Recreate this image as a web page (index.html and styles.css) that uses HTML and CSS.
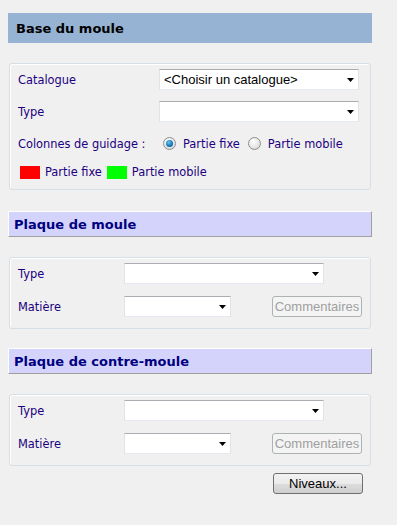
FILE: index.html
```html
<!DOCTYPE html>
<html lang="fr">
<head>
<meta charset="utf-8">
<title>Base du moule</title>
<link rel="stylesheet" href="styles.css">
</head>
<body>
<div class="page">
  <div class="head head-main">Base du moule</div>
  <div class="group g1">
    <div class="row">
      <span class="lbl w1">Catalogue</span>
      <div class="select w200"><span class="val">&lt;Choisir un catalogue&gt;</span><svg class="arr" width="7" height="4" viewBox="0 0 7 4"><path d="M0 0H7L3.5 4Z" fill="#000"/></svg></div>
    </div>
    <div class="row">
      <span class="lbl w1">Type</span>
      <div class="select w200"><span class="val"></span><svg class="arr" width="7" height="4" viewBox="0 0 7 4"><path d="M0 0H7L3.5 4Z" fill="#000"/></svg></div>
    </div>
    <div class="row">
      <span class="lbl w1">Colonnes de guidage :</span>
      <span class="radio on"></span><span class="rtxt">Partie fixe</span>
      <span class="radio"></span><span class="rtxt">Partie mobile</span>
    </div>
    <div class="row legend">
      <span class="sw red"></span><span class="ltxt">Partie fixe</span>
      <span class="sw green"></span><span class="ltxt">Partie mobile</span>
    </div>
  </div>

  <div class="head head-sub">Plaque de moule</div>
  <div class="group g2">
    <div class="row">
      <span class="lbl w2">Type</span>
      <div class="select w200"><span class="val"></span><svg class="arr" width="7" height="4" viewBox="0 0 7 4"><path d="M0 0H7L3.5 4Z" fill="#000"/></svg></div>
    </div>
    <div class="row">
      <span class="lbl w2">Matière</span>
      <div class="select w107"><span class="val"></span><svg class="arr" width="7" height="4" viewBox="0 0 7 4"><path d="M0 0H7L3.5 4Z" fill="#000"/></svg></div>
      <button class="btn disabled" disabled>Commentaires</button>
    </div>
  </div>

  <div class="head head-sub">Plaque de contre-moule</div>
  <div class="group g3">
    <div class="row">
      <span class="lbl w2">Type</span>
      <div class="select w200"><span class="val"></span><svg class="arr" width="7" height="4" viewBox="0 0 7 4"><path d="M0 0H7L3.5 4Z" fill="#000"/></svg></div>
    </div>
    <div class="row">
      <span class="lbl w2">Matière</span>
      <div class="select w107"><span class="val"></span><svg class="arr" width="7" height="4" viewBox="0 0 7 4"><path d="M0 0H7L3.5 4Z" fill="#000"/></svg></div>
      <button class="btn disabled" disabled>Commentaires</button>
    </div>
  </div>

  <div class="actions">
    <button class="btn niveaux">Niveaux...</button>
  </div>
</div>
</body>
</html>
```

FILE: styles.css
```css
html, body {
  margin: 0;
  padding: 0;
  background: #f0f0f0;
}
body {
  width: 397px;
  height: 525px;
  overflow: hidden;
  font-family: "DejaVu Sans", Verdana, sans-serif;
  font-size: 11.4px;
}
.page {
  padding: 13px 0 0 8px;
  width: 364px;
}
.head {
  box-sizing: border-box;
  display: flex;
  align-items: center;
  font-weight: bold;
  font-size: 13px;
}
.head-main {
  height: 30px;
  background: #97b3d3;
  color: #000;
  padding-left: 8px;
  margin-bottom: 20px;
}
.head-sub {
  height: 26px;
  background: #d3d3fb;
  color: #000080;
  padding-left: 5px;
  border-top: 1px solid #ffffff;
  border-left: 1px solid #ffffff;
  border-right: 1px solid #a0a0a0;
  border-bottom: 1px solid #a0a0a0;
  margin-bottom: 20px;
}
.group {
  box-sizing: border-box;
  width: 362px;
  margin-left: 1px;
  border: 1px solid #d5dfe5;
  border-radius: 3px;
  box-shadow: inset 1px 1px 0 #ffffff;
  padding: 5px 8px 10px 8px;
  display: flex;
  flex-direction: column;
  gap: 11px;
}
.g1 { margin-bottom: 21px; height: 127px; }
.g2 { gap: 12px; margin-bottom: 19px; height: 72px; }
.g3 { gap: 12px; height: 72px; }
.row {
  display: flex;
  align-items: center;
  height: 21px;
}
.lbl {
  color: #200080;
  flex: none;
}
.w1 { width: 141px; }
.w2 { width: 106px; }
.select {
  box-sizing: border-box;
  height: 21px;
  background: #fff;
  border: 1px solid #e2e3ea;
  border-top-color: #abadb3;
  border-bottom-color: #e3e9ef;
  display: flex;
  align-items: center;
  justify-content: space-between;
  padding: 0 4px 0 4px;
  font-family: "Liberation Sans", Arial, sans-serif;
  font-size: 13px;
  color: #000;
}
.w200 { width: 200px; }
.w107 { width: 107px; }
.arr { flex: none; }
.radio {
  box-sizing: border-box;
  width: 13px;
  height: 13px;
  border-radius: 50%;
  border: 1px solid #8f8f8f;
  background: radial-gradient(circle at 40% 35%, #ffffff 0%, #e6e6e6 55%, #c8c8c8 100%);
  margin-left: 4px;
  flex: none;
  position: relative;
}
.radio.on::after {
  content: "";
  position: absolute;
  left: 2px;
  top: 2px;
  width: 7px;
  height: 7px;
  border-radius: 50%;
  background: radial-gradient(circle at 40% 35%, #6ec8f0 0%, #1a80c0 50%, #0b3f70 100%);
}
.rtxt {
  color: #200080;
  margin-left: 7px;
  margin-right: 4px;
}
.legend {
  height: 14px;
  padding-left: 2px;
}
.sw {
  width: 20px;
  height: 13px;
  flex: none;
}
.red { background: #ff0000; }
.green { background: #00ff00; }
.ltxt {
  color: #200080;
  margin-left: 5px;
  margin-right: 5px;
}
.btn {
  box-sizing: border-box;
  height: 21px;
  width: 90px;
  padding: 0;
  border-radius: 3px;
  font-family: "Liberation Sans", Arial, sans-serif;
  font-size: 13px;
}
.btn.disabled {
  margin-left: 41px;
  border: 1px solid #adb2b5;
  background: #f4f4f4;
  color: #a0a0a0;
}
.actions {
  display: flex;
  justify-content: flex-end;
  width: 355px;
  margin-top: 7px;
}
.niveaux {
  border: 1px solid #707070;
  background: linear-gradient(#f2f2f2 0%, #ebebeb 50%, #dddddd 51%, #cfcfcf 100%);
  color: #000;
}
```
